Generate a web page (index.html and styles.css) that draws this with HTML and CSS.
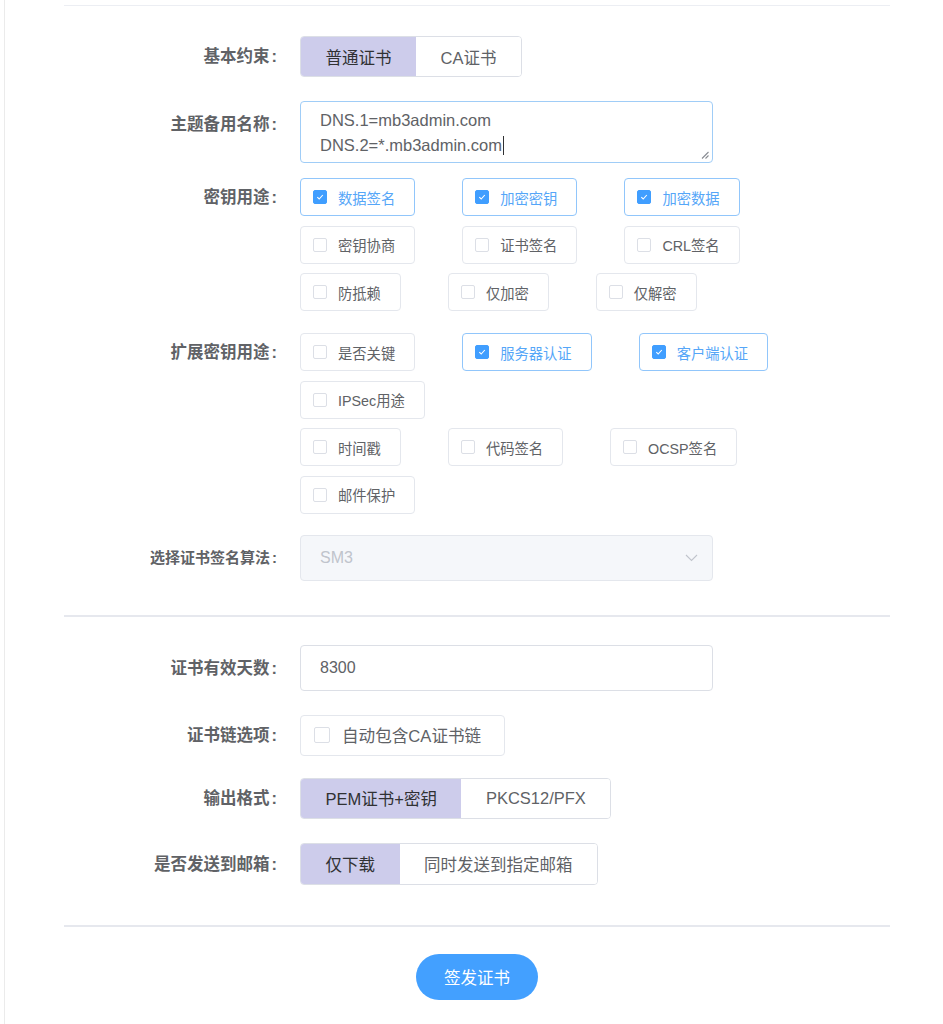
FILE: index.html
```html
<!DOCTYPE html>
<html lang="zh-CN">
<head>
<meta charset="utf-8">
<title>签发证书</title>
<link rel="stylesheet" href="styles.css">
</head>
<body>
<div class="page">
  <div class="divider divider-top"></div>
  <div class="form">
    <div class="row row-basic">
      <div class="lbl lh41">基本约束<span class="colon">:</span></div>
      <div class="seg">
        <span class="seg-btn active">普通证书</span>
        <span class="seg-btn">CA证书</span>
      </div>
    </div>

    <div class="row row-san">
      <div class="lbl lh46">主题备用名称<span class="colon">:</span></div>
      <div class="textarea">
        <div class="ta-line">DNS.1=mb3admin.com</div>
        <div class="ta-line">DNS.2=*.mb3admin.com<span class="caret"></span></div>
        <svg class="grip" width="8" height="8" viewBox="0 0 8 8"><path d="M1 7.5L7.5 1M4.5 7.5L7.5 4.5" stroke="#8a8d93" stroke-width="1.1" fill="none"/></svg>
      </div>
    </div>

    <div class="row row-ku">
      <div class="lbl lh38">密钥用途<span class="colon">:</span></div>
      <div class="groups">
        <div class="group">
          <span class="cb checked"><span class="box"><svg width="10" height="10" viewBox="0 0 10 10"><path d="M2.3 5.2L4.2 7L7.8 3" stroke="#fff" stroke-width="1.1" fill="none"/></svg></span><span class="cb-text">数据签名</span></span>
          <span class="cb checked"><span class="box"><svg width="10" height="10" viewBox="0 0 10 10"><path d="M2.3 5.2L4.2 7L7.8 3" stroke="#fff" stroke-width="1.1" fill="none"/></svg></span><span class="cb-text">加密密钥</span></span>
          <span class="cb checked"><span class="box"><svg width="10" height="10" viewBox="0 0 10 10"><path d="M2.3 5.2L4.2 7L7.8 3" stroke="#fff" stroke-width="1.1" fill="none"/></svg></span><span class="cb-text">加密数据</span></span>
        </div>
        <div class="group">
          <span class="cb"><span class="box"></span><span class="cb-text">密钥协商</span></span>
          <span class="cb"><span class="box"></span><span class="cb-text">证书签名</span></span>
          <span class="cb"><span class="box"></span><span class="cb-text">CRL签名</span></span>
        </div>
        <div class="group">
          <span class="cb"><span class="box"></span><span class="cb-text">防抵赖</span></span>
          <span class="cb"><span class="box"></span><span class="cb-text">仅加密</span></span>
          <span class="cb"><span class="box"></span><span class="cb-text">仅解密</span></span>
        </div>
      </div>
    </div>

    <div class="row row-eku">
      <div class="lbl lh38">扩展密钥用途<span class="colon">:</span></div>
      <div class="groups">
        <div class="group">
          <span class="cb"><span class="box"></span><span class="cb-text">是否关键</span></span>
          <span class="cb checked"><span class="box"><svg width="10" height="10" viewBox="0 0 10 10"><path d="M2.3 5.2L4.2 7L7.8 3" stroke="#fff" stroke-width="1.1" fill="none"/></svg></span><span class="cb-text">服务器认证</span></span>
          <span class="cb checked"><span class="box"><svg width="10" height="10" viewBox="0 0 10 10"><path d="M2.3 5.2L4.2 7L7.8 3" stroke="#fff" stroke-width="1.1" fill="none"/></svg></span><span class="cb-text">客户端认证</span></span>
          <span class="cb"><span class="box"></span><span class="cb-text">IPSec用途</span></span>
        </div>
        <div class="group">
          <span class="cb"><span class="box"></span><span class="cb-text">时间戳</span></span>
          <span class="cb"><span class="box"></span><span class="cb-text">代码签名</span></span>
          <span class="cb"><span class="box"></span><span class="cb-text">OCSP签名</span></span>
          <span class="cb"><span class="box"></span><span class="cb-text">邮件保护</span></span>
        </div>
      </div>
    </div>

    <div class="row row-alg">
      <div class="lbl lbl-long lh46">选择证书签名算法<span class="colon">:</span></div>
      <div class="select">
        <span class="select-val">SM3</span>
        <svg class="chev" width="13" height="8" viewBox="0 0 13 8"><path d="M1 1L6.5 6.5L12 1" stroke="#c0c4cc" stroke-width="1.1" fill="none"/></svg>
      </div>
    </div>

    <div class="divider divider-mid"></div>

    <div class="row row-days">
      <div class="lbl lh46">证书有效天数<span class="colon">:</span></div>
      <div class="input">8300</div>
    </div>

    <div class="row row-chain">
      <div class="lbl lh41">证书链选项<span class="colon">:</span></div>
      <span class="cb cb-lg"><span class="box"></span><span class="cb-text">自动包含CA证书链</span></span>
    </div>

    <div class="row row-fmt">
      <div class="lbl lh41">输出格式<span class="colon">:</span></div>
      <div class="seg">
        <span class="seg-btn active">PEM证书+密钥</span>
        <span class="seg-btn">PKCS12/PFX</span>
      </div>
    </div>

    <div class="row row-mail">
      <div class="lbl lh42">是否发送到邮箱<span class="colon">:</span></div>
      <div class="seg seg-42">
        <span class="seg-btn active">仅下载</span>
        <span class="seg-btn">同时发送到指定邮箱</span>
      </div>
    </div>

    <div class="divider divider-bot"></div>

    <div class="actions">
      <span class="btn-primary">签发证书</span>
    </div>
  </div>
</div>
</body>
</html>
```

FILE: styles.css
```css
html, body {
  margin: 0;
  padding: 0;
  background: #ffffff;
}

body {
  font-family: "Liberation Sans", "Noto Sans CJK SC", Arial, sans-serif;
  color: #606266;
  font-size: 16px;
}

.page {
  margin-left: 4px;
  border-left: 1px solid #ebebeb;
  padding: 5px 53px 0 59px;
  min-height: 1024px;
  box-sizing: border-box;
}

.divider {
  height: 2px;
  background: #e6e8ee;
}

.divider-top {
  height: 1px;
  background: #eceef3;
}

.form {
  padding-top: 30px;
}

.row {
  display: flex;
  align-items: flex-start;
}

.lbl {
  width: 236px;
  flex: none;
  box-sizing: border-box;
  padding-right: 23px;
  text-align: right;
  font-weight: bold;
  font-size: 16.5px;
  color: #606266;
  white-space: nowrap;
}

.lbl .colon {
  margin-left: 2px;
}

.lbl-long {
  font-size: 15px;
}

.lh38 { line-height: 38px; }
.lh41 { line-height: 41px; }
.lh42 { line-height: 42px; }
.lh46 { line-height: 46px; }

/* segmented radio buttons */
.seg {
  display: flex;
  height: 41px;
  border: 1px solid #dcdfe6;
  border-radius: 4px;
  box-sizing: border-box;
  overflow: hidden;
}

.seg-42 { height: 42px; }

.seg-btn {
  display: flex;
  align-items: center;
  padding: 0 24.5px;
  font-size: 16.5px;
  color: #606266;
  background: #ffffff;
  white-space: nowrap;
}

.seg-btn.active {
  background: #cdcceb;
  color: #303133;
}

.row-basic { margin-bottom: 24px; }
.row-san { margin-bottom: 15px; }
.row-ku { margin-bottom: 22px; }
.row-eku { margin-bottom: 21px; }
.row-alg { margin-bottom: 34px; }
.row-days { margin-top: 28px; margin-bottom: 24px; }
.row-chain { margin-bottom: 22px; }
.row-fmt { margin-bottom: 24px; }
.row-mail { margin-bottom: 40px; }

/* textarea */
.textarea {
  position: relative;
  width: 413px;
  height: 62px;
  box-sizing: border-box;
  border: 1px solid #a0cdf7;
  border-radius: 4px;
  padding: 6px 19px;
  font-size: 16.5px;
  line-height: 25px;
  color: #606266;
}

.caret {
  display: inline-block;
  width: 1px;
  height: 19px;
  background: #303133;
  vertical-align: -4px;
  margin-left: 1px;
}

.grip {
  position: absolute;
  right: 3px;
  bottom: 3px;
}

/* checkbox groups */
.groups {
  display: flex;
  flex-direction: column;
  gap: 9.5px;
}

.group {
  display: flex;
  flex-wrap: wrap;
  column-gap: 47px;
  row-gap: 9.5px;
  width: 560px;
}

.cb {
  display: inline-flex;
  align-items: center;
  height: 38px;
  box-sizing: border-box;
  border: 1px solid #e4e7ed;
  border-radius: 4px;
  padding: 0 19px 0 12px;
  font-size: 14.3px;
  color: #606266;
  white-space: nowrap;
}

.cb .box {
  width: 14px;
  height: 14px;
  box-sizing: border-box;
  border: 1px solid #dcdfe6;
  border-radius: 2px;
  background: #ffffff;
  margin-right: 11px;
  display: flex;
  align-items: center;
  justify-content: center;
  flex: none;
}

.cb.checked {
  border-color: #91c6fb;
}

.cb.checked .box {
  background: #409eff;
  border-color: #409eff;
}

.cb.checked .cb-text {
  color: #55a6f8;
}

.cb-lg {
  height: 41px;
  padding: 0 23px 0 13px;
  font-size: 16.6px;
}

.cb-lg .box {
  width: 16px;
  height: 16px;
  margin-right: 12px;
}

/* select */
.select {
  width: 413px;
  height: 46px;
  box-sizing: border-box;
  border: 1px solid #e4e7ed;
  border-radius: 4px;
  background: #f5f7fa;
  display: flex;
  align-items: center;
  justify-content: space-between;
  padding: 0 14px 0 19px;
  font-size: 16px;
  color: #c0c4cc;
}

/* input */
.input {
  width: 413px;
  height: 46px;
  box-sizing: border-box;
  border: 1px solid #dcdfe6;
  border-radius: 4px;
  display: flex;
  align-items: center;
  padding: 0 19px;
  font-size: 16px;
  color: #606266;
}

/* actions */
.actions {
  display: flex;
  justify-content: center;
  padding-top: 27px;
}

.btn-primary {
  display: flex;
  align-items: center;
  justify-content: center;
  width: 122px;
  height: 46px;
  border-radius: 23px;
  background: #43a0ff;
  color: #ffffff;
  font-size: 16.5px;
}
```
